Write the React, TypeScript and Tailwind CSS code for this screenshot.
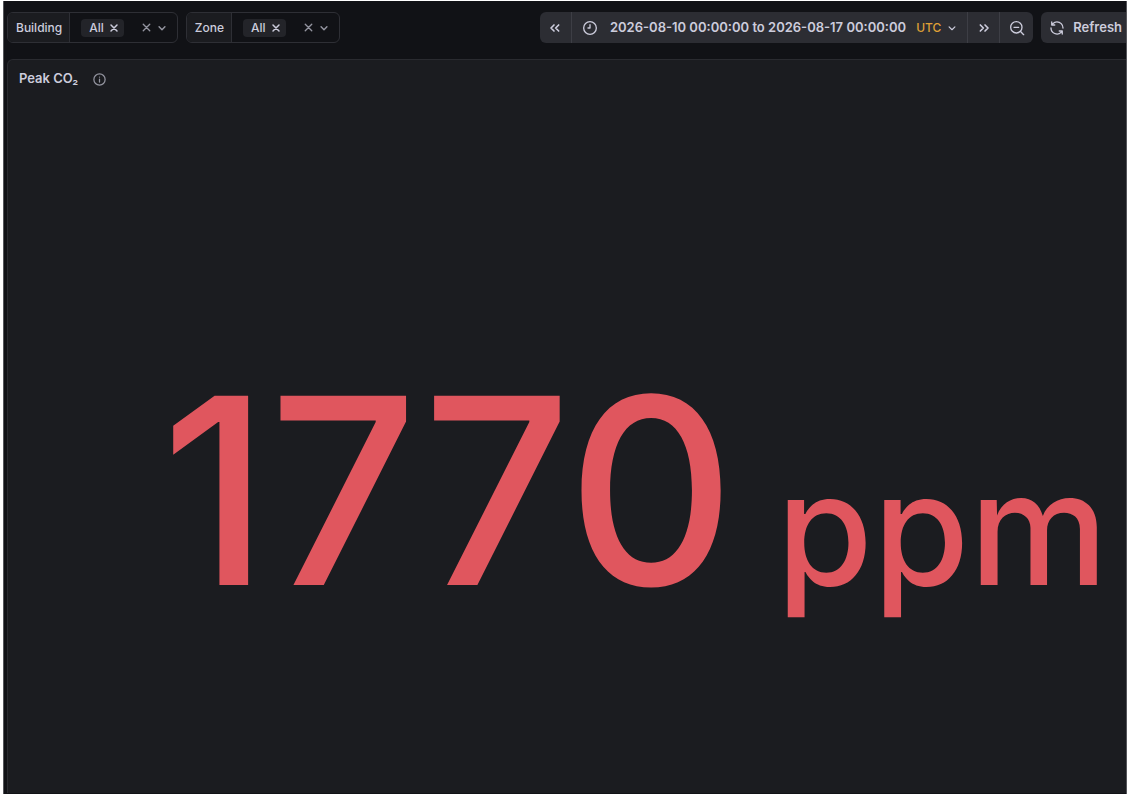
import React from 'react';

const ICONS = {
  times: <path d="M6 6l12 12M18 6L6 18" />,
  angleDown: <path d="M7 10l5 5 5-5" />,
  doubleLeft: <path d="M10.5 7.5L6 12l4.5 4.5M17.5 7.5L13 12l4.5 4.5" />,
  doubleRight: <path d="M6.5 7.5L11 12l-4.5 4.5M13.5 7.5L18 12l-4.5 4.5" />,
  clock: (
    <>
      <circle cx="12" cy="12" r="9.5" />
      <path d="M12 7v5H9" />
    </>
  ),
  searchMinus: (
    <>
      <circle cx="11" cy="11" r="8.5" />
      <path d="M17 17l5 5M7.5 11h7" />
    </>
  ),
  info: (
    <>
      <circle cx="12" cy="12" r="9" />
      <path d="M12 11.5V16M12 8v.1" />
    </>
  ),
  sync: (
    <path
      fill="currentColor"
      stroke="none"
      d="M19.91,15.51H15.38a1,1,0,0,0,0,2h2.4A8,8,0,0,1,4,12a1,1,0,0,0-2,0,10,10,0,0,0,16.88,7.23V21a1,1,0,0,0,2,0V16.5A1,1,0,0,0,19.91,15.51ZM12,2A10,10,0,0,0,5.12,4.77V3a1,1,0,0,0-2,0V7.5a1,1,0,0,0,1,1h4.5a1,1,0,0,0,0-2H6.22A8,8,0,0,1,20,12a1,1,0,0,0,2,0A10,10,0,0,0,12,2Z"
    />
  ),
};

function Icon({ name, className, strokeWidth = 2 }: { name: keyof typeof ICONS; className?: string; strokeWidth?: number }) {
  return (
    <svg
      viewBox="0 0 24 24"
      fill="none"
      stroke="currentColor"
      strokeWidth={strokeWidth}
      strokeLinecap="round"
      strokeLinejoin="round"
      aria-hidden="true"
      className={`shrink-0 ${className ?? 'size-4'}`}
    >
      {ICONS[name]}
    </svg>
  );
}

function VariableSelect({ id, label }: { id: string; label: string }) {
  return (
    <div className="flex h-[31px] shrink-0 items-stretch overflow-hidden rounded-md border border-[#2e2f35]">
      <label htmlFor={id} className="flex items-center border-r border-[#2e2f35] bg-[#1b1c20] pr-[7px] pl-2 text-[12px] font-medium">
        {label}
      </label>
      <div className="flex items-center pr-2 pl-[11px]">
        <span className="flex h-[18px] items-center gap-1 rounded-sm bg-[#232429] pr-1 pl-2 text-[12px] font-medium">
          All
          <button type="button" aria-label={`Remove All from ${label}`}>
            <Icon name="times" className="size-3" strokeWidth={3} />
          </button>
        </span>
        <input id={id} type="text" role="combobox" aria-expanded="false" className="w-4 bg-transparent outline-none" />
        <button type="button" aria-label={`Clear ${label}`} className="text-[#9495a0]">
          <Icon name="times" className="size-[13px]" strokeWidth={2.5} />
        </button>
        <button type="button" aria-label={`Open ${label} options`} className="ml-0.5 text-[#9495a0]">
          <Icon name="angleDown" className="size-[14px]" strokeWidth={2.5} />
        </button>
      </div>
    </div>
  );
}

function TimeControls() {
  return (
    <div className="ml-auto flex shrink-0 gap-2">
      <div className="flex h-[31px] divide-x divide-[#3d3e45] overflow-hidden rounded-md bg-[#2c2d33]">
        <button type="button" aria-label="Move time range backwards" className="flex w-8 items-center justify-center">
          <Icon name="doubleLeft" strokeWidth={2.5} />
        </button>
        <button type="button" className="flex items-center pr-2 pl-2.5 text-[13px] font-semibold">
          <Icon name="clock" />
          <span className="ml-3">2026-08-10 00:00:00 to 2026-08-17 00:00:00</span>
          <span className="ml-2.5 text-[12px] font-medium text-[#dfa036]">UTC</span>
          <Icon name="angleDown" className="ml-1 size-[14px]" />
        </button>
        <button type="button" aria-label="Move time range forwards" className="flex w-8 items-center justify-center">
          <Icon name="doubleRight" strokeWidth={2.5} />
        </button>
        <button type="button" aria-label="Zoom out time range" className="flex w-[33px] items-center justify-center">
          <Icon name="searchMinus" />
        </button>
      </div>
      <button type="button" className="flex h-[31px] items-center gap-2 rounded-l-md bg-[#2c2d33] pr-1 pl-2 text-[13px] font-semibold">
        <Icon name="sync" />
        Refresh
      </button>
    </div>
  );
}

export default function App() {
  return (
    <div className="flex min-h-screen bg-white pt-px pr-[3px] pl-[3px] font-['Inter',sans-serif] text-[#ccccdc]">
      <main className="flex min-w-0 flex-1 flex-col overflow-hidden border-x border-[#55565b] bg-[#111216] pl-[3px]">
        <div className="flex items-start gap-2 pt-[11px] pb-4">
          <VariableSelect id="var-building" label="Building" />
          <VariableSelect id="var-zone" label="Zone" />
          <TimeControls />
        </div>

        <section className="mb-px flex flex-1 flex-col rounded-tl-md border-t border-l border-[#2a2b30] bg-[#1b1c20]">
          <header className="flex h-[38px] items-center gap-3.5 px-[11px]">
            <h2 className="text-[13px] font-semibold">Peak CO₂</h2>
            <button type="button" aria-label="Panel description" className="text-[#9495a0]">
              <Icon name="info" className="size-[15px]" />
            </button>
          </header>
          <div className="flex flex-1 items-center justify-end pt-[90px] pr-[18px]">
            <p className="text-[260px] leading-none font-medium whitespace-pre text-[#e0565e]">
              1770<span className="text-[156px]"> ppm</span>
            </p>
          </div>
        </section>
      </main>
    </div>
  );
}
